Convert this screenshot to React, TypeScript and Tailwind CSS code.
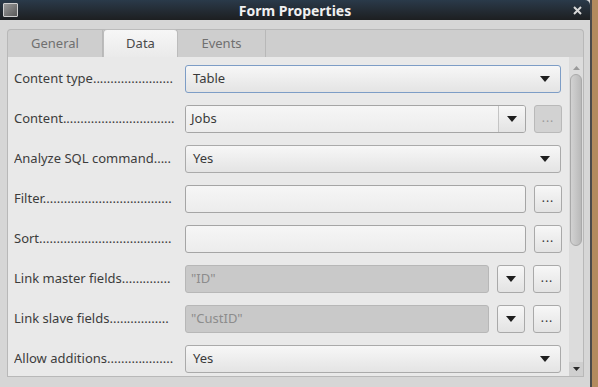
import React from "react"

const font = { fontFamily: '"Noto Sans", "Open Sans", sans-serif' }

function Arrow() {
  return (
    <svg width="10" height="6" viewBox="0 0 10 6" className="shrink-0">
      <path d="M0 0 L10 0 L5 6 Z" fill="#1e1e1e" />
    </svg>
  )
}

function Dots({ disabled }: { disabled?: boolean }) {
  return (
    <button
      className={
        "flex h-[28px] w-[28px] shrink-0 items-end justify-center rounded-[3px] border pb-[8px] text-[12px] leading-none " +
        (disabled
          ? "border-[#b9b9b9] bg-[#d2d2d2] text-[#9a9a9a]"
          : "border-[#a9a9a9] bg-gradient-to-b from-[#f7f7f7] to-[#e3e3e3] text-[#333]")
      }
    >
      <span className="tracking-[1px]">...</span>
    </button>
  )
}

function Combo({ value, focus }: { value: string; focus?: boolean }) {
  return (
    <div
      className={
        "flex h-[28px] w-[376px] items-center justify-between rounded-[3px] border bg-gradient-to-b from-[#f7f7f7] to-[#e4e4e4] pl-[7px] pr-[10px] text-[13px] text-[#3a3a3a] " +
        (focus ? "border-[#7d9dc6]" : "border-[#aaaaaa]")
      }
    >
      <span>{value}</span>
      <Arrow />
    </div>
  )
}

function TextBox({ value = "", disabled, width }: { value?: string; disabled?: boolean; width: string }) {
  return (
    <div
      className={
        "flex h-[28px] items-center rounded-[3px] border pl-[5px] text-[13px] " +
        width +
        (disabled
          ? " border-[#b7b7b7] bg-[#c9c9c9] text-[#8c8c8c]"
          : " border-[#a5a5a5] bg-gradient-to-b from-[#f6f6f6] to-[#ececec] text-[#3a3a3a]")
      }
    >
      {value}
    </div>
  )
}

function ArrowBtn() {
  return (
    <div className="flex h-[28px] w-[28px] shrink-0 items-center justify-center rounded-[3px] border border-[#a9a9a9] bg-gradient-to-b from-[#f7f7f7] to-[#e3e3e3]">
      <Arrow />
    </div>
  )
}

function Row({ label, dots, children }: { label: string; dots: number; children: React.ReactNode }) {
  return (
    <div className="flex h-[29px] items-center">
      <div className="w-[163px] overflow-hidden whitespace-nowrap text-[13px] text-[#3c3c3c]">
        {label}
        {".".repeat(dots)}
      </div>
      <div className="ml-[8px] flex items-center gap-[8px]">{children}</div>
    </div>
  )
}

export default function App() {
  return (
    <div className="flex h-[387px] w-[598px] bg-[#b38b5e]" style={font}>
      <div className="flex h-full w-[592px] flex-col border-r-2 border-[#4b4b4b] bg-[#d6d6d6]">
        <div className="relative flex h-[20px] shrink-0 items-center justify-center rounded-tr-[5px] bg-gradient-to-b from-[#2a3a4a] to-[#1d1f21]">
          <div className="absolute left-[3px] top-[3px] h-[14px] w-[15px] rounded-[1px] border border-[#cfcfcf] bg-gradient-to-br from-[#9a9a9a] to-[#5a5a5a]" />
          <span className="text-[14px] font-bold text-[#f0f0f0]">Form Properties</span>
          <svg className="absolute right-[8px] top-[6px]" width="9" height="9" viewBox="0 0 9 9">
            <path d="M1 1 L8 8 M8 1 L1 8" stroke="#d8d8d8" strokeWidth="2" />
          </svg>
        </div>

        <div className="ml-[7px] mt-[9px] flex w-[577px] flex-col">
          <div className="flex h-[28px] rounded-t-[4px] border border-b-0 border-[#b8b8b8] bg-[#cecece] text-[13px]">
            <div className="flex w-[95px] items-center justify-center border-r border-[#b8b8b8] text-[#707070]">General</div>
            <div className="-mt-[1px] flex w-[75px] items-center justify-center rounded-t-[4px] border-x border-t border-[#bcbcbc] bg-gradient-to-b from-[#f7f7f7] to-[#eaeaea] text-[#4a4a4a]">
              Data
            </div>
            <div className="flex w-[88px] items-center justify-center border-r border-[#b8b8b8] text-[#707070]">Events</div>
          </div>

          <div className="flex h-[320px] border border-t-0 border-[#b8b8b8] bg-[#e9e9e9]">
            <div className="flex flex-1 flex-col gap-[11px] pl-[6px] pt-[7px]">
              <Row label="Content type" dots={23}>
                <Combo value="Table" focus />
              </Row>
              <Row label="Content" dots={32}>
                <div className="flex h-[28px] w-[341px] overflow-hidden rounded-[3px] border border-[#a5a5a5]">
                  <div className="flex flex-1 items-center bg-gradient-to-b from-[#f6f6f6] to-[#ececec] pl-[5px] text-[13px] text-[#3a3a3a]">
                    Jobs
                  </div>
                  <div className="flex w-[27px] items-center justify-center border-l border-[#c4c4c4] bg-gradient-to-b from-[#f7f7f7] to-[#e3e3e3]">
                    <Arrow />
                  </div>
                </div>
                <Dots disabled />
              </Row>
              <Row label="Analyze SQL command" dots={5}>
                <Combo value="Yes" />
              </Row>
              <Row label="Filter" dots={37}>
                <TextBox width="w-[341px]" />
                <Dots />
              </Row>
              <Row label="Sort" dots={38}>
                <TextBox width="w-[341px]" />
                <Dots />
              </Row>
              <Row label="Link master fields" dots={14}>
                <TextBox width="w-[304px]" value={'"ID"'} disabled />
                <ArrowBtn />
                <Dots />
              </Row>
              <Row label="Link slave fields" dots={17}>
                <TextBox width="w-[304px]" value={'"CustID"'} disabled />
                <ArrowBtn />
                <Dots />
              </Row>
              <Row label="Allow additions" dots={19}>
                <Combo value="Yes" />
              </Row>
            </div>

            <div className="flex w-[14px] shrink-0 flex-col items-center bg-[#dcdcdc]">
              <div className="flex h-[17px] items-center justify-center pt-[4px]">
                <svg width="7" height="4" viewBox="0 0 7 4">
                  <path d="M0 4 L7 4 L3.5 0 Z" fill="#9a9a9a" />
                </svg>
              </div>
              <div className="h-[172px] w-[12px] rounded-[6px] border border-[#a9a9a9] bg-gradient-to-r from-[#d2d2d2] via-[#c6c6c6] to-[#b9b9b9]" />
              <div className="flex-1" />
              <div className="flex h-[14px] w-full items-center justify-center bg-[#cfcfcf]">
                <svg width="7" height="4" viewBox="0 0 7 4">
                  <path d="M0 0 L7 0 L3.5 4 Z" fill="#2a2a2a" />
                </svg>
              </div>
            </div>
          </div>
        </div>
      </div>
    </div>
  )
}
